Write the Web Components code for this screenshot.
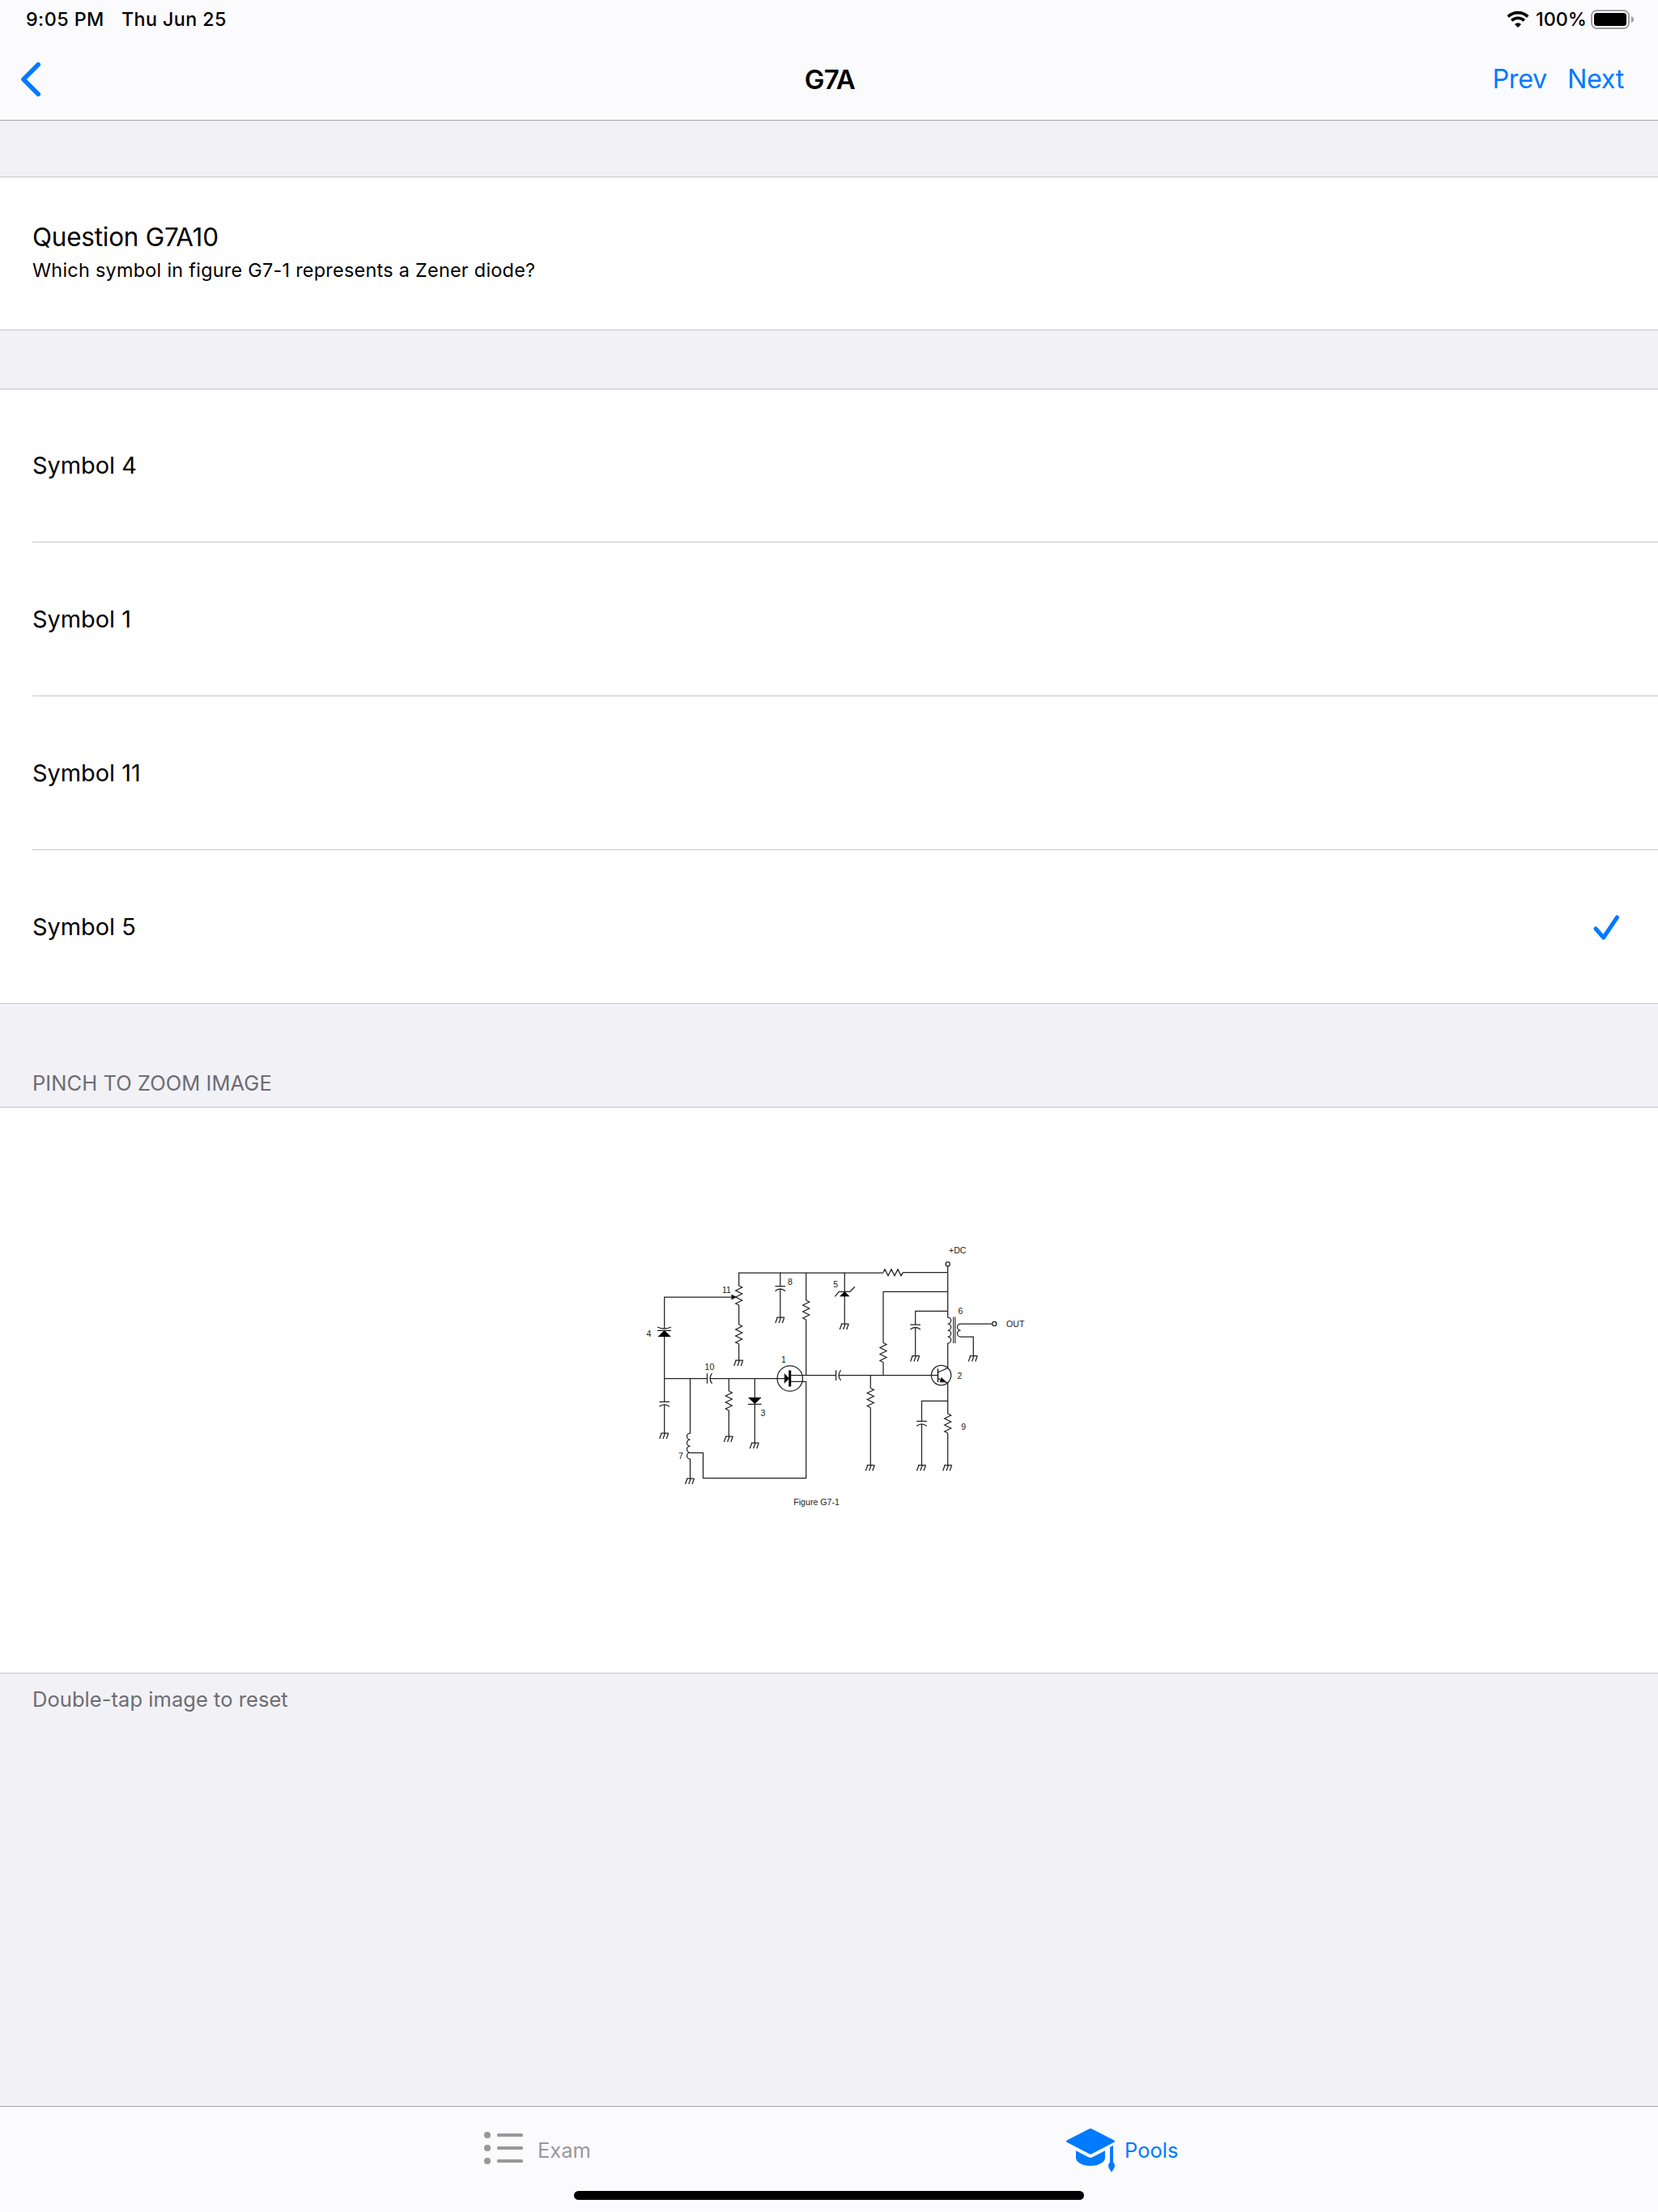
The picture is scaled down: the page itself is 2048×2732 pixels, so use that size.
<!DOCTYPE html>
<html lang="en"><head><meta charset="utf-8"><title>G7A</title>
<style>html,body{margin:0;padding:0}body{font-family:Inter,sans-serif;background:#f2f1f6;width:2048px;height:2732px;overflow:hidden}</style></head>
<body>
<exam-app></exam-app>
<script>
const define=(name,html,init)=>customElements.define(name,class extends HTMLElement{
 constructor(){super();this.attachShadow({mode:'open'}).innerHTML=html;}
 connectedCallback(){if(init)init(this,this.shadowRoot);}
});

define('status-bar',`<style>
:host{display:flex;justify-content:space-between;height:40px;box-sizing:border-box;padding:12px 29px 0 32px;font:500 23.3px/24px Inter,sans-serif;color:#000}
.l,.r{display:flex;height:24px;white-space:pre}
.time{width:118px;letter-spacing:.45px}.date{letter-spacing:.4px}
.pct{margin-left:8px;width:68px;letter-spacing:0}
svg{display:block}
</style>
<div class="l"><span class="time">9:05 PM</span><span class="date">Thu Jun 25</span></div>
<div class="r">
<svg width="28" height="24" viewBox="0 0 28 24" fill="none" stroke="#000" stroke-width="3.7"><path d="M1.8 8.6A17.4 17.4 0 0 1 26.2 8.6"/><path d="M6.2 13.4A11.2 11.2 0 0 1 21.8 13.4"/><path d="M14 22l-4-4.1a5.8 5.8 0 0 1 8 0z" fill="#000" stroke="none"/></svg>
<span class="pct">100%</span>
<svg width="54" height="24" viewBox="0 0 54 24"><rect x="1" y="1" width="46" height="22" rx="6.5" fill="none" stroke="#a0a0a2" stroke-width="2"/><rect x="4" y="4" width="40" height="16" rx="3.5"/><path d="M50 8q3 1.2 3 4t-3 4z" fill="#a0a0a2"/></svg>
</div>`);

define('nav-bar',`<style>
:host{display:grid;grid-template-columns:1fr auto 1fr;align-items:center;height:108px;box-sizing:border-box;padding:8px 42px 0;color:#007aff;font:400 32.4px/40px Inter,sans-serif}
h1{margin:0;padding-left:2px;color:#000;font:600 33px/40px Inter,sans-serif;letter-spacing:-.5px}
.a{display:flex;justify-content:flex-end;gap:25px;letter-spacing:-.35px}
svg{display:block;margin-left:-18px}
</style>
<svg width="28" height="44" viewBox="0 0 28 44" fill="none" stroke="#007aff" stroke-width="5.6" stroke-linecap="round" stroke-linejoin="round"><path d="M23.2 3.8L5 22l18.2 18.2"/></svg>
<h1><slot></slot></h1><div class="a"><span>Prev</span><span>Next</span></div>`);

define('question-card',`<style>
:host{display:flex;flex-direction:column;box-sizing:border-box;height:190px;padding:53px 40px 0;background:#fff;border:solid #c7c7cb;border-width:1px 0}
.t{font:400 31.5px/42px Inter,sans-serif;letter-spacing:-.25px}.q{font:400 23.4px/30px Inter,sans-serif;margin-top:5px;letter-spacing:.27px}
</style><div class="t"><slot name="title"></slot></div><div class="q"><slot></slot></div>`);

define('answer-row',`<style>
:host{display:flex;padding-left:40px;height:190px;box-sizing:border-box}
:host(:first-child),:host([last]){height:189px}
.b{flex:1;display:flex;align-items:center;justify-content:space-between;padding-right:45px;border-bottom:1px solid #c7c7cb;font:400 28.9px/36px Inter,sans-serif}
:host([last]) .b{border:0}
svg{display:none}:host([checked]) svg{display:block}
</style><div class="b"><slot></slot><svg width="37" height="36" viewBox="0 0 37 36" fill="none" stroke="#007aff" stroke-width="5" stroke-linecap="round" stroke-linejoin="round"><path d="M5 20l9.7 11L31.5 6"/></svg></div>`);

define('answer-list',`<style>:host{display:block;background:#fff;border:solid #c7c7cb;border-width:1px 0;margin-top:72px}</style><slot></slot>`);

define('section-note',`<style>:host{display:flex;box-sizing:border-box;padding:0 40px;color:#6d6d72;font:400 25.5px/32px Inter,sans-serif;letter-spacing:.05px;white-space:nowrap}</style><span><slot></slot></span>`);

define('circuit-figure',`<style>
:host{display:flex;justify-content:center;height:700px;box-sizing:border-box;background:#fff;border:solid #c7c7cb;border-width:1px 0}
svg{display:block}text{font:10.6px "Liberation Sans",sans-serif;fill:#222;stroke:none}
</style><svg width="2048" height="698" viewBox="0 1368 2048 698" fill="none" stroke="#222" stroke-width="1.25"></svg>`,(el,root)=>{
 const p=[];
 const path=(d,x='')=>p.push('<path d="'+d+'" '+x+'/>');
 const gnd=(x,y)=>path('M'+(x-4.5)+' '+y+'h9.5M'+(x-3.5)+' '+y+'l-2.5 7M'+(x+.8)+' '+y+'l-2.5 7M'+(x+5)+' '+y+'l-2.5 7');
 const res=(x,y)=>path('M'+x+' '+y+'l4 2-8 4 8 4-8 4 8 4-8 4 4 2');
 const cap=(x,y,w=6.3)=>path('M'+(x-w)+' '+y+'h'+2*w+'M'+(x-w)+' '+(y+6)+'q'+w+' -5 '+2*w+' 0');
 const capH=(x,y)=>path('M'+x+' '+(y-6.3)+'v12.6M'+(x+6)+' '+(y-6.3)+'q-5 6.3 0 12.6');
 const text=(x,y,s)=>p.push('<text x="'+x+'" y="'+y+'">'+s+'</text>');
 path('M912.7 1588V1572H1091M1115.3 1571.6H1170.7');path('M1091 1571.6l2 -4 4 8 4-8 4 8 4-8 4 8 2.3-4');
 res(912.7,1588);path('M912.7 1612v24');res(912.7,1636);path('M912.7 1660v20');gnd(912.7,1680);
 path('M820.7 1640V1602H905');path('M904 1599.5l5 2.5-5 2.5z','fill="#000"');
 path('M812 1639q8.5 4 17 0M812 1643.3h17');path('M812.5 1651l8.2-8 8.2 8z','fill="#000" stroke="none"');
 path('M820.7 1651V1731M820.7 1734.8V1770');cap(820.7,1731.3);gnd(820.7,1770);
 path('M820.7 1702.5H873.5M877 1702.5H972');capH(873.5,1702.5);
 path('M852.5 1702.5V1770a4 4 0 0 0 0 8a4 4 0 0 0 0 8a4 4 0 0 0 0 8a4 4 0 0 0 0 8V1826');gnd(852.5,1826);
 path('M852.5 1794.3h16v31.3H995.7V1706.4H976');
 path('M900.3 1702.5V1718');res(900.3,1718);path('M900.3 1742v32');gnd(900.3,1774);
 path('M932.3 1702.5v80');path('M924 1726h16.6l-8.3 8z','fill="#000" stroke="none"');path('M924 1734.4h16.6');gnd(932.3,1782);
 path('M963.8 1571.8V1588M963.8 1592V1627');cap(963.8,1588.5);gnd(963.8,1627);
 path('M995.7 1571.8V1606');res(995.7,1606);path('M995.7 1630V1698.6');
 p.push('<circle cx="975.8" cy="1702.5" r="15.7"/>');path('M969.3 1697.5l5 5-5 5z','fill="#000"');
 path('M975.7 1692.5v20','stroke-width="3" stroke="#000"');path('M976 1698.6H1032.6M1036 1698.6H1158');capH(1032.6,1698.6);
 path('M1043.3 1571.8v63');path('M1037 1601.3l6.3-6.3 6.3 6.3z','fill="#000" stroke="none"');path('M1031.3 1601.3l5-6h13.6l6-6');gnd(1043.3,1635);
 path('M1170.7 1564V1627a4 4 0 0 1 0 8a4 4 0 0 1 0 8a4 4 0 0 1 0 8a4 4 0 0 1 0 8V1689.5L1158.5 1695');
 p.push('<circle cx="1170.7" cy="1561.3" r="2.6"/><circle cx="1228.3" cy="1635" r="2.6"/><circle cx="1162.6" cy="1698.6" r="12.2"/>');
 path('M1158.5 1690.5v16.5','stroke-width="1.6"');path('M1158.5 1702.5L1170.7 1708V1746');path('M1163 1702l5 4.8-6.5-.2z','fill="#000"');
 res(1170.7,1746);path('M1170.7 1770v39.5');gnd(1170.7,1809.5);
 path('M1170.7 1595.3H1091V1658.5');res(1091,1658.5);path('M1091 1682.5v16');
 path('M1170.7 1619.3H1130.7V1636M1130.7 1640V1674.5');cap(1130.7,1636);gnd(1130.7,1674.5);
 path('M1177.7 1626.5V1659M1179.9 1626.5V1659','stroke-width="1.1"');
 path('M1225.7 1635H1186.5a4 4 0 0 0 0 8a4 4 0 0 0 0 8H1202.3V1674.5');gnd(1202.3,1674.5);
 path('M1075.3 1698.6V1714.5');res(1075.3,1714.5);path('M1075.3 1738.5v71');gnd(1075.3,1809.5);
 path('M1170.7 1730.3H1138.5V1755.3M1138.5 1759V1809.5');cap(1138.5,1755.3);gnd(1138.5,1809.5);
 [[798.5,1651,'4'],[892,1596.5,'11'],[973,1587,'8'],[1029.3,1589.5,'5'],[870.5,1691.5,'10'],[965,1683,'1'],[939.5,1749,'3'],[838,1801.5,'7'],[1172,1547.5,'+DC'],[1183.5,1623,'6'],[1243,1639,'OUT'],[1182.5,1702.5,'2'],[1187.3,1766,'9'],[980.3,1858.5,'Figure G7-1']].forEach(a=>text(...a));
 root.querySelector('svg').innerHTML=p.join('');
});

define('tab-item',`<style>:host{display:flex;align-items:center;color:#98989b;font:400 25.5px/32px Inter,sans-serif}:host([active]){color:#007aff}span{padding-top:3px}</style><slot name="icon"></slot><span><slot></slot></span>`);
define('tab-bar',`<style>
:host{display:block;height:131px;box-sizing:border-box;border-top:1px solid #a7a7aa;background:#fbfbfd}
.tabs{display:flex;height:104px;padding-left:596px;box-sizing:border-box}.tabs tab-item:first-child{width:720px}
.home{width:630px;height:11px;border-radius:6px;background:#000;margin:0 auto}
svg{display:block}
</style><div class="tabs">
<tab-item><svg slot="icon" width="68" height="44" viewBox="0 1 68 44" fill="currentColor"><circle cx="6" cy="6" r="4.1"/><circle cx="6" cy="22" r="4.1"/><circle cx="6" cy="38" r="4.1"/><rect x="18" y="4" width="32" height="4" rx="1.5"/><rect x="18" y="20" width="32" height="4" rx="1.5"/><rect x="18" y="36" width="32" height="4" rx="1.5"/></svg>Exam</tab-item>
<tab-item active><svg slot="icon" width="73" height="58" viewBox="0 -1 73 58" fill="currentColor"><path d="M29.5 3.3q1.5-.7 3 0L60.3 17.600q1.4 1.100 0 2.200L32.500 34.300q-1.500.8-3 0L1.700 19.800q-1.400-1.100 0-2.200z"/><path d="M13 30.300L28.500 38.200q2.500 1.300 5 0L49 30.300V39C49 44.500 41 49 31 49S13 44.500 13 39z"/><path d="M55 26l4-2.200V44.500q2 1.500 2 4.500c0 2.500-3 6-4 8-1-2-4-5.500-4-8q0-3 2-4.500z"/></svg>Pools</tab-item></div><div class="home"></div>`);

define('exam-app',`<style>
:host{display:flex;flex-direction:column;height:2732px;background:#f2f1f6;color:#000}
header{height:149px;box-sizing:border-box;border-bottom:1px solid #a7a7aa;background:#fbfbfd}
main{flex:1;display:flex;flex-direction:column;padding-top:69px}
.head{height:127px;padding-top:82px}.foot{margin-top:16px}
</style><header><status-bar></status-bar><nav-bar>G7A</nav-bar></header>
<main><question-card><span slot="title">Question G7A10</span>Which symbol in figure G7-1 represents a Zener diode?</question-card>
<answer-list><answer-row>Symbol 4</answer-row><answer-row>Symbol 1</answer-row><answer-row>Symbol 11</answer-row><answer-row checked last>Symbol 5</answer-row></answer-list>
<section-note class="head">PINCH TO ZOOM IMAGE</section-note><circuit-figure></circuit-figure><section-note class="foot">Double-tap image to reset</section-note></main><tab-bar></tab-bar>`);
</script></body></html>
